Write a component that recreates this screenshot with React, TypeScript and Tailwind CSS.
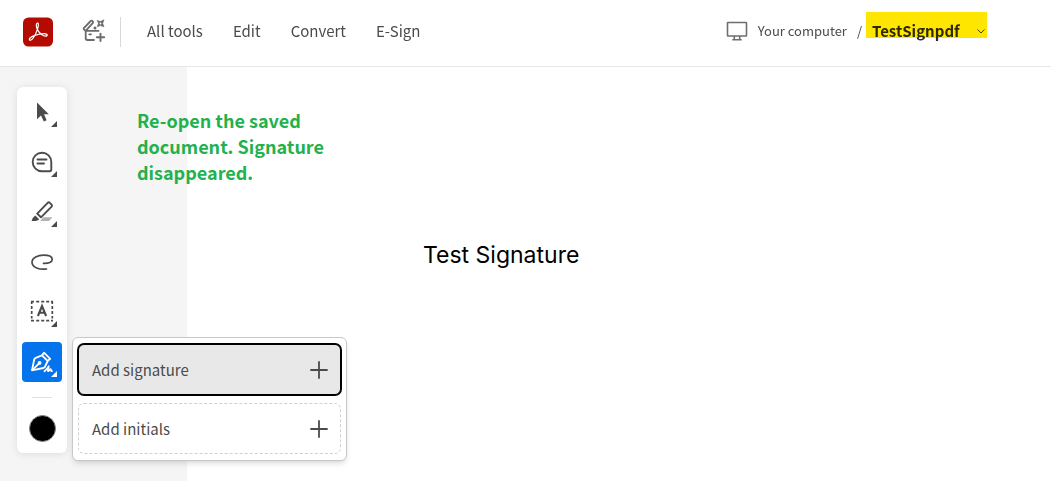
import type { ReactNode } from 'react';

const uiFont = "font-['Noto_Sans_CJK_SC','Noto_Sans',sans-serif]";

function AcrobatLogo() {
  return (
    <svg className="size-[30px]" viewBox="0 0 30 30" aria-hidden="true">
      <rect width="30" height="29" y="0.5" rx="5.5" fill="#b30b00" />
      <path
        d="M14.6 6.200c-1.500.1-1.600 2.300-.8 4.800.8 2.600 2.500 5 4.700 6.500 1.900 1.300 4.600 2 5.500 1 .8-1-.5-1.900-2.800-1.900-3.600 0-8 1.100-11.200 2.500-2.200 1-3.800 2.200-3.600 3.400.2 1.200 1.900 1 3.500-1.100 1.800-2.300 3.500-5.800 4.500-9 .9-2.900 1.600-6.300.2-6.200z"
        fill="none"
        stroke="#fff"
        strokeWidth="1.200"
        strokeLinejoin="round"
      />
    </svg>
  );
}

function AiToolsIcon() {
  return (
    <svg className="size-6" viewBox="0 0 24 24" fill="none" stroke="#6b6b6b" strokeWidth="1.800" strokeLinejoin="round" strokeLinecap="round" aria-hidden="true">
      <path d="M3.700 11.900H16.500M3.700 11.900V19.300Q3.700 21 5.400 21H12" />
      <path d="M3.700 11.900 1.900 10.300Q1.300 9.500 2.100 8.800L8.700 2Q9.700 1.200 10.600 2.200 11.500 3.100 10.700 4.100L3.700 11.900Z" />
      <path d="M7.200 15.300H9" />
      <path d="M18.500 14.600V22M14.800 18.300H22.200" strokeWidth="1.900" />
      <path d="M15.400 1.500 18.400 2.500 22 .8 20.700 4.400 22 7.800 18.400 6.600 15.300 7.800 16.400 4.500Z" fill="#6b6b6b" strokeWidth="0.600" />
      <circle cx="18.500" cy="4.500" r="0.900" fill="#fff" stroke="none" />
      <circle cx="13" cy="9" r="1.500" fill="#6b6b6b" stroke="none" />
    </svg>
  );
}

function SelectIcon() {
  return (
    <svg className="size-6" viewBox="0 0 24 24" aria-hidden="true">
      <path d="M7 2.600V19.300L11 15.600L13.800 21.400L16.600 20.200L14 14.300H18.800Z" fill="#4b4b4b" />
    </svg>
  );
}

function CommentIcon() {
  return (
    <svg className="size-6" viewBox="0 0 24 24" fill="none" stroke="#4b4b4b" strokeWidth="1.900" aria-hidden="true">
      <path d="M12 2.700A9.300 9.300 0 1 0 12 21.300H19.600Q21.300 21.300 21.300 19.600V12A9.300 9.300 0 0 0 12 2.700Z" />
      <path d="M7.500 9.500H16.500M7.500 13.500H14" strokeLinecap="round" />
    </svg>
  );
}

function HighlightIcon() {
  return (
    <svg className="size-6" viewBox="0 0 24 24" aria-hidden="true">
      <path d="M13.500 17.200H22.500L19 21H10.300Z" fill="#b1b1b1" />
      <path d="M7.200 13.600 17.700 2.800Q18.700 1.900 19.700 2.800L21.600 4.700Q22.500 5.700 21.600 6.700L11 17.300Z" fill="none" stroke="#4b4b4b" strokeWidth="1.900" strokeLinejoin="round" />
      <path d="M5.200 15.500 9.200 19.300Q7.700 21 5.500 21H1.600Q2.200 17.500 5.200 15.500Z" fill="#4b4b4b" />
    </svg>
  );
}

function DrawIcon() {
  return (
    <svg className="size-6" viewBox="0 0 24 24" fill="none" stroke="#4b4b4b" strokeWidth="1.700" strokeLinecap="round" aria-hidden="true">
      <path d="M16.500 19C9.500 19.900 2 17.500 2 12.200 2 7.500 8 5.200 13.500 5.200 18.500 5.200 22.200 6.800 22.200 9.400 22.200 12.200 18.500 13.600 13.500 13.300" />
    </svg>
  );
}

function TextBoxIcon() {
  return (
    <svg className="size-6" viewBox="0 0 24 24" fill="none" stroke="#4b4b4b" aria-hidden="true">
      <path d="M1 1.700H4M6.200 1.700H9.200M11.200 1.700H14.200M16.200 1.700H19.200M21 1.700H23M1 20.700H4M6.200 20.700H9.200M11.200 20.700H14.200M16.200 20.700H19.200M21 20.700H23M1.700 1.500V4M1.700 6V9M1.700 11V14M1.700 16V18.500M22.300 1.500V4M22.300 6V9M22.300 11V14M22.300 16V18.500" strokeWidth="1.700" />
      <path d="M7.900 16 12 6 16.100 16M9.500 12.800H14.500" strokeWidth="2.100" />
    </svg>
  );
}

function SignIcon() {
  return (
    <svg className="size-6" viewBox="0 0 24 24" fill="none" stroke="#fff" strokeWidth="1.800" strokeLinejoin="round" strokeLinecap="round" aria-hidden="true">
      <path d="M2 20.300 4.200 9.500Q4.500 8.300 5.700 7.800L12 5.400 17.700 11 15.100 16.500Q14.600 17.600 13.300 18Z" />
      <path d="M12 5.400 14 2.700 20.200 8.800 17.700 11" />
      <path d="M2.500 19.800 9 13.500" />
      <circle cx="9.600" cy="12.900" r="1" fill="#fff" />
      <path d="M14.500 21.200Q17.300 19 18.700 16.300C18.700 18.500 17.200 20.800 18.100 21.200 19 21.500 19.800 18.800 20.700 19.200 21.400 19.600 20.500 21.200 22 21.100" />
    </svg>
  );
}

function ComputerIcon() {
  return (
    <svg className="h-5 w-[22px]" viewBox="0 0 22 20" fill="none" stroke="#6e6e6e" strokeWidth="1.600" aria-hidden="true">
      <rect x="1.500" y="1.500" width="19" height="13.500" rx="0.500" />
      <path d="M8.300 15V18.300M13.700 15V18.300M6.300 18.700H15.700" />
    </svg>
  );
}

function PlusIcon() {
  return (
    <svg className="size-[18px]" viewBox="0 0 18 18" fill="none" stroke="#4b4b4b" strokeWidth="1.800" strokeLinecap="round" aria-hidden="true">
      <path d="M9 1V17M1 9H17" />
    </svg>
  );
}

interface ToolProps {
  label: string;
  icon: ReactNode;
  active?: boolean;
  more?: boolean;
}

function ToolButton({ label, icon, active = false, more = true }: ToolProps) {
  return (
    <button
      type="button"
      aria-label={label}
      aria-pressed={active}
      className={`relative flex size-10 items-center justify-center rounded ${active ? 'bg-[#0573ec] text-white' : 'text-[#4b4b4b]'}`}
    >
      {icon}
      {more && (
        <svg className="absolute right-[5px] bottom-[5px] size-1.5" viewBox="0 0 6 6" aria-hidden="true">
          <path d="M6 0V6H0Z" fill="currentColor" />
        </svg>
      )}
    </button>
  );
}

const tools: ToolProps[] = [
  { label: 'Select', icon: <SelectIcon /> },
  { label: 'Add comment', icon: <CommentIcon /> },
  { label: 'Highlight', icon: <HighlightIcon /> },
  { label: 'Draw', icon: <DrawIcon />, more: false },
  { label: 'Add text', icon: <TextBoxIcon /> },
];

const menuItem = 'flex h-[51px] items-center justify-between rounded-md pr-3 pl-[13px] text-[15px] text-[#4b4b4b]';

function SignMenu() {
  return (
    <div className="absolute -top-[5px] left-[50px] z-10 flex w-[275px] flex-col gap-2 rounded-md border border-[#c8c8c8] bg-white px-[5px] py-1.5 shadow-md">
      <button type="button" className={`${menuItem} border border-black bg-[#e8e8e8] ring-1 ring-black`}>
        Add signature
        <PlusIcon />
      </button>
      <button type="button" className={`${menuItem} border border-dashed border-[#d0d0d0]`}>
        Add initials
        <PlusIcon />
      </button>
    </div>
  );
}

function Header() {
  return (
    <header className="flex h-[67px] items-center border-b border-[#e6e6e6] bg-white pr-16 pb-[3px] pl-[23px] text-[#4b4b4b]">
      <a href="#home" aria-label="Acrobat home">
        <AcrobatLogo />
      </a>
      <button type="button" aria-label="AI tools" className="ml-5 flex h-10 w-[42px] items-center justify-center pb-0.5">
        <AiToolsIcon />
      </button>
      <nav className="ml-[5px] flex h-[30px] items-center gap-[30px] border-l border-[#d8d8d8] pb-0.5 pl-[26px] text-[15px]">
        <a href="#all-tools">All tools</a>
        <a href="#edit">Edit</a>
        <a href="#convert">Convert</a>
        <a href="#e-sign">E-Sign</a>
      </nav>
      <div className="ml-auto flex items-center pb-0.5 text-[13px]">
        <ComputerIcon />
        <a href="#computer" className="ml-2.5">Your computer</a>
        <span className="ml-2.5">/</span>
        <button type="button" className="relative ml-1 flex w-[121px] items-center justify-between pr-px pl-1.5 text-[15px] font-bold text-[#2c2c2c]">
          TestSignpdf
          <svg className="size-2.5" viewBox="0 0 10 10" fill="none" stroke="#4b4b4b" aria-hidden="true">
            <path d="M1.500 3.500 5 7 8.500 3.500" />
          </svg>
          <span className="absolute inset-x-0 -top-[7px] h-[26px] bg-[#ffe600] mix-blend-multiply" />
        </button>
      </div>
    </header>
  );
}

export default function App() {
  return (
    <div className={`flex min-h-screen flex-col bg-white leading-6 ${uiFont}`}>
      <Header />
      <main className="relative flex flex-1">
        <aside className="w-[187px] shrink-0 bg-[#f5f5f5] pt-5 pb-7 pl-[17px]">
          <div className="flex w-[50px] flex-col items-center gap-2.5 rounded-md bg-white p-[5px] shadow-[0_1px_8px_rgba(0,0,0,0.10)]">
            {tools.map((tool) => (
              <ToolButton key={tool.label} {...tool} />
            ))}
            <div className="relative">
              <ToolButton label="Sign" icon={<SignIcon />} active />
              <SignMenu />
            </div>
            <hr className="mt-[5px] w-5 border-[#e1e1e1]" />
            <button type="button" aria-label="Color" className="flex size-10 items-center justify-center">
              <span className="size-[27px] rounded-full border border-[#8a8a8a] bg-black" />
            </button>
          </div>
        </aside>
        <article className="flex-1 bg-white pt-[172px] pl-[236px]">
          <p className="font-['Inter',sans-serif] text-[23px] leading-8 text-black">Test Signature</p>
        </article>
        <p className="absolute top-10 left-[137px] w-[210px] text-lg leading-[26px] font-bold text-[#22b14c]">
          Re-open the saved document. Signature disappeared.
        </p>
      </main>
    </div>
  );
}
